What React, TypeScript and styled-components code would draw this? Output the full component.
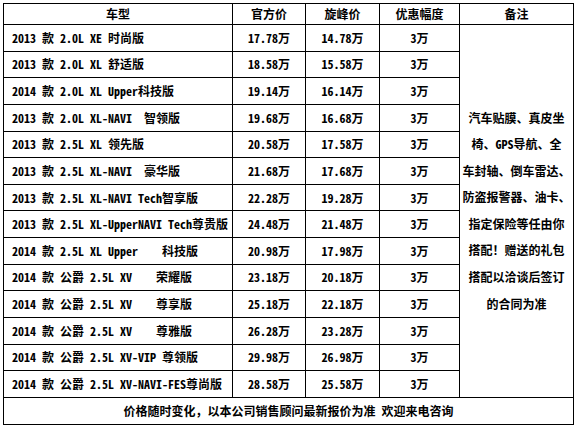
import React from 'react'
import styled, { createGlobalStyle } from 'styled-components'

const GlobalStyle = createGlobalStyle`
    html, body {
        margin: 0;
        padding: 0;
        background: #fff;
    }
    body {
        font-family: "Noto Sans Mono CJK SC", "Liberation Mono", "Noto Sans CJK SC", monospace;
        color: #000;
    }
`

const rows = [
    ['2013 款 2.0L XE 时尚版', '17.78万', '14.78万'],
    ['2013 款 2.0L XL 舒适版', '18.58万', '15.58万'],
    ['2014 款 2.0L XL Upper科技版', '19.14万', '16.14万'],
    ['2013 款 2.0L XL-NAVI  智领版', '19.68万', '16.68万'],
    ['2013 款 2.5L XL 领先版', '20.58万', '17.58万'],
    ['2013 款 2.5L XL-NAVI  豪华版', '21.68万', '17.68万'],
    ['2013 款 2.5L XL-NAVI Tech智享版', '22.28万', '19.28万'],
    ['2013 款 2.5L XL-UpperNAVI Tech尊贵版', '24.48万', '21.48万'],
    ['2014 款 2.5L XL Upper    科技版', '20.98万', '17.98万'],
    ['2014 款 公爵 2.5L XV    荣耀版', '23.18万', '20.18万'],
    ['2014 款 公爵 2.5L XV    尊享版', '25.18万', '22.18万'],
    ['2014 款 公爵 2.5L XV    尊雅版', '26.28万', '23.28万'],
    ['2014 款 公爵 2.5L XV-VIP 尊领版', '29.98万', '26.98万'],
    ['2014 款 公爵 2.5L XV-NAVI-FES尊尚版', '28.58万', '25.58万'],
]

const remark = [
    '汽车贴膜、真皮坐',
    '椅、GPS导航、全',
    '车封轴、倒车雷达、',
    '防盗报警器、油卡、',
    '指定保险等任由你',
    '搭配！赠送的礼包',
    '搭配以洽谈后签订',
    '的合同为准',
]

const App = () => {
    return (
        <>
            <GlobalStyle />
            <Page>
                <PriceTable>
                    <colgroup>
                        <col style={{ width: 229 }} />
                        <col style={{ width: 73 }} />
                        <col style={{ width: 74 }} />
                        <col style={{ width: 80 }} />
                        <col style={{ width: 114 }} />
                    </colgroup>
                    <thead>
                        <HeadRow>
                            <Th>车型</Th>
                            <Th>官方价</Th>
                            <Th>旋峰价</Th>
                            <Th>优惠幅度</Th>
                            <Th>备注</Th>
                        </HeadRow>
                    </thead>
                    <tbody>
                        {rows.map((r, i) => (
                            <Row key={i}>
                                <Td align="left">{r[0]}</Td>
                                <Td>{r[1]}</Td>
                                <Td>{r[2]}</Td>
                                <Td>3万</Td>
                                {i === 0 && (
                                    <Remark rowSpan={rows.length}>
                                        {remark.map((line, j) => (
                                            <RemarkLine key={j}>{line}</RemarkLine>
                                        ))}
                                    </Remark>
                                )}
                            </Row>
                        ))}
                        <FootRow>
                            <Td colSpan={5}>价格随时变化，以本公司销售顾问最新报价为准 欢迎来电咨询</Td>
                        </FootRow>
                    </tbody>
                </PriceTable>
            </Page>
        </>
    )
}

export default App

const Page = styled.div`
    padding: 3px 0 0 3px;
`

const PriceTable = styled.table`
    width: 571px;
    table-layout: fixed;
    border-collapse: collapse;
    border: 1px solid #000;
    font-size: 12px;
    font-weight: 700;
`

const HeadRow = styled.tr`
    height: 21px;
`

const Row = styled.tr`
    height: 26.64px;
`

const FootRow = styled.tr`
    height: 27px;
`

const Th = styled.th`
    border: 1px solid #000;
    padding: 0;
    text-align: center;
    font-weight: 700;
    line-height: 14px;
`

const Td = styled.td<{ align?: 'left' | 'center' }>`
    border: 1px solid #000;
    padding: ${(p) => (p.align === 'left' ? '0 0 0 8px' : '0')};
    text-align: ${(p) => p.align || 'center'};
    white-space: pre;
    line-height: 14px;
`

const Remark = styled.td`
    border: 1px solid #000;
    padding: 0;
    text-align: center;
    vertical-align: middle;
`

const RemarkLine = styled.div`
    line-height: 26.6px;
    white-space: nowrap;
`
